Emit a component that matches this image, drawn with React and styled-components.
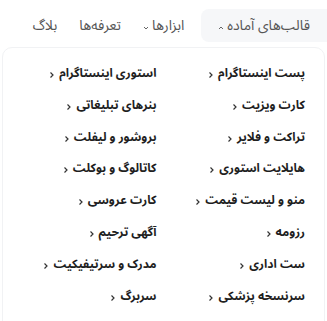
import React from "react";
import styled, { createGlobalStyle } from "styled-components";

const Global = createGlobalStyle`
  html, body {
    margin: 0;
    padding: 0;
    background: #fff;
  }
  body {
    font-family: "Noto Sans Arabic", "DejaVu Sans Condensed", "DejaVu Sans", sans-serif;
  }
`;

const Page = styled.div`
  direction: rtl;
  width: 327px;
  height: 321px;
  overflow: hidden;
  background: #fff;
`;

const Nav = styled.nav`
  display: flex;
  align-items: stretch;
  height: 33px;
  margin-top: 9px;
`;

const Tab = styled.div`
  display: flex;
  align-items: center;
  gap: 3px;
  padding: 0 ${(p) => (p.$active ? "17px" : "11px")};
  margin-left: ${(p) => (p.$active ? "6px" : "0")};
  background: ${(p) => (p.$active ? "#f6f7f9" : "transparent")};
  border-radius: ${(p) => (p.$active ? "8px 0 0 8px" : "0")};
  font-size: 14px;
  color: #555;
  white-space: nowrap;
`;

const Caret = styled.svg`
  width: 6px;
  height: 6px;
  margin-top: 4px;
  transform: ${(p) => (p.$up ? "rotate(180deg)" : "none")};
`;

const Panel = styled.div`
  margin: 5px 2px 0;
  border: 1px solid #f1f2f4;
  border-radius: 10px;
  padding: 18px 19px 0;
  display: grid;
  grid-template-columns: 1fr 1fr;
  grid-auto-rows: 31.8px;
  column-gap: 14px;
  height: 300px;
`;

const Item = styled.a`
  display: flex;
  align-items: flex-start;
  gap: 4px;
  font-size: 12px;
  font-weight: 700;
  color: #1f1f1f;
  text-decoration: none;
  line-height: 16px;
  white-space: nowrap;
`;

const Arrow = styled.svg`
  width: 6px;
  height: 8px;
  margin-top: 5px;
  flex-shrink: 0;
`;

const right = [
  "پست اینستاگرام",
  "کارت ویزیت",
  "تراکت و فلایر",
  "هایلایت استوری",
  "منو و لیست قیمت",
  "رزومه",
  "ست اداری",
  "سرنسخه پزشکی",
];

const left = [
  "استوری اینستاگرام",
  "بنرهای تبلیغاتی",
  "بروشور و لیفلت",
  "کاتالوگ و بوکلت",
  "کارت عروسی",
  "آگهی ترحیم",
  "مدرک و سرتیفیکیت",
  "سربرگ",
];

function Down({ up }) {
  return (
    <Caret $up={up} viewBox="0 0 6 6">
      <path d="M1 2 L3 4 L5 2" fill="none" stroke="#666" strokeWidth="1" />
    </Caret>
  );
}

function Chevron() {
  return (
    <Arrow viewBox="0 0 6 8">
      <path d="M1.5 1.5 L4 4 L1.5 6.5" fill="none" stroke="#333" strokeWidth="1.2" />
    </Arrow>
  );
}

export default function App() {
  return (
    <Page>
      <Global />
      <Nav>
        <Tab $active>
          قالب‌های آماده
          <Down up />
        </Tab>
        <Tab>
          ابزارها
          <Down />
        </Tab>
        <Tab>تعرفه‌ها</Tab>
        <Tab>بلاگ</Tab>
      </Nav>
      <Panel>
        {right.map((r, i) => (
          <React.Fragment key={r}>
            <Item href="#">
              {r}
              <Chevron />
            </Item>
            <Item href="#">
              {left[i]}
              <Chevron />
            </Item>
          </React.Fragment>
        ))}
      </Panel>
    </Page>
  );
}
